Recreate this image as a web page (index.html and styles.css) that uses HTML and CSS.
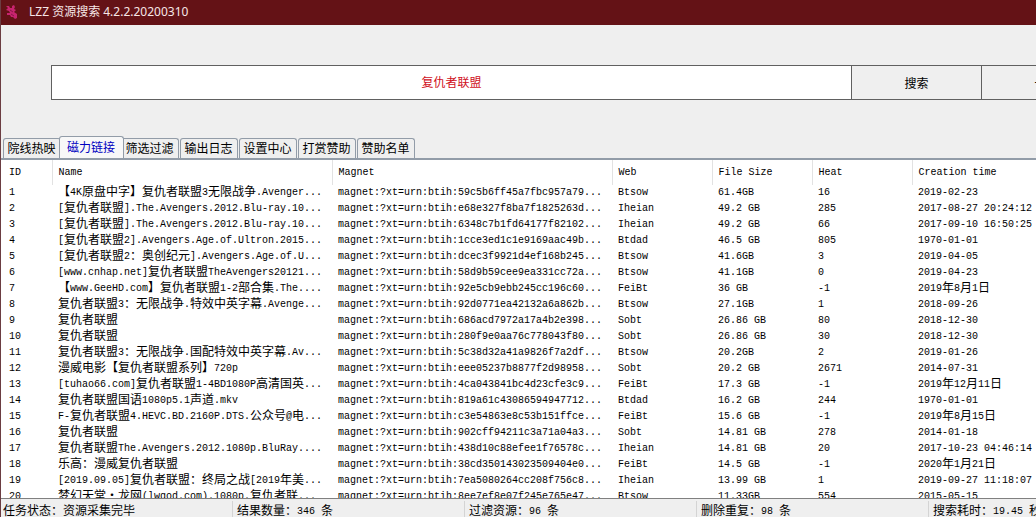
FILE: index.html
```html
<!DOCTYPE html>
<html lang="zh-CN">
<head>
<meta charset="utf-8">
<title>LZZ 资源搜索 4.2.2.20200310</title>
<link rel="stylesheet" href="styles.css">
</head>
<body>
<div class="window">
  <header class="titlebar">
    <svg class="logo" viewBox="0 0 14 16" aria-hidden="true">
      <path fill="#c8246e" d="M1 2 L4 2 L5 4 L7 4 L7 2 L9 1 L10 3 L9 5 L11 6 L9 8 L12 10 L12 14 L10 15 L8 13 L6 13 L5 11 L2 11 L2 9 L5 9 L4 7 L1 6 L3 4 Z"/>
      <path stroke="#8a1648" fill="none" d="M5 6 L8 8 M6 10 L9 12"/>
    </svg>
    <h1 class="title">LZZ 资源搜索 4.2.2.20200310</h1>
  </header>

  <form class="search">
    <input class="search-input" type="text" value="复仇者联盟" aria-label="搜索关键词">
    <button class="search-button" type="button">搜索</button>
    <button class="search-button" type="button">一键</button>
  </form>

  <nav class="tabs">
    <button class="tab" type="button">院线热映</button>
    <button class="tab active" type="button">磁力链接</button>
    <button class="tab" type="button">筛选过滤</button>
    <button class="tab" type="button">输出日志</button>
    <button class="tab" type="button">设置中心</button>
    <button class="tab" type="button">打赏赞助</button>
    <button class="tab" type="button">赞助名单</button>
  </nav>

  <main class="results">
    <table class="grid">
      <colgroup>
        <col class="col-id"><col class="col-wide"><col class="col-wide"><col class="col-narrow"><col class="col-narrow"><col class="col-narrow"><col>
      </colgroup>
      <thead>
        <tr><th>ID</th><th>Name</th><th>Magnet</th><th>Web</th><th>File Size</th><th>Heat</th><th>Creation time</th></tr>
      </thead>
      <tbody>
        <tr><td>1</td><td><span class="zh">【</span>4K<span class="zh">原盘中字】复仇者联盟</span>3<span class="zh">无限战争</span>.Avenger...</td><td>magnet:?xt=urn:btih:59c5b6ff45a7fbc957a79...</td><td>Btsow</td><td>61.4GB</td><td>16</td><td>2019-02-23</td></tr>
        <tr><td>2</td><td>[<span class="zh">复仇者联盟</span>].The.Avengers.2012.Blu-ray.10...</td><td>magnet:?xt=urn:btih:e68e327f8ba7f1825263d...</td><td>Iheian</td><td>49.2 GB</td><td>285</td><td>2017-08-27 20:24:12</td></tr>
        <tr><td>3</td><td>[<span class="zh">复仇者联盟</span>].The.Avengers.2012.Blu-ray.10...</td><td>magnet:?xt=urn:btih:6348c7b1fd64177f82102...</td><td>Iheian</td><td>49.2 GB</td><td>66</td><td>2017-09-10 16:50:25</td></tr>
        <tr><td>4</td><td>[<span class="zh">复仇者联盟</span>2].Avengers.Age.of.Ultron.2015...</td><td>magnet:?xt=urn:btih:1cce3ed1c1e9169aac49b...</td><td>Btdad</td><td>46.5 GB</td><td>805</td><td>1970-01-01</td></tr>
        <tr><td>5</td><td>[<span class="zh">复仇者联盟</span>2<span class="zh">：奥创纪元</span>].Avengers.Age.of.U...</td><td>magnet:?xt=urn:btih:dcec3f9921d4ef168b245...</td><td>Btsow</td><td>41.6GB</td><td>3</td><td>2019-04-05</td></tr>
        <tr><td>6</td><td>[www.cnhap.net]<span class="zh">复仇者联盟</span>TheAvengers20121...</td><td>magnet:?xt=urn:btih:58d9b59cee9ea331cc72a...</td><td>Btsow</td><td>41.1GB</td><td>0</td><td>2019-04-23</td></tr>
        <tr><td>7</td><td><span class="zh">【</span>www.GeeHD.com<span class="zh">】复仇者联盟</span>1-2<span class="zh">部合集</span>.The....</td><td>magnet:?xt=urn:btih:92e5cb9ebb245cc196c60...</td><td>FeiBt</td><td>36 GB</td><td>-1</td><td>2019<span class="zh">年</span>8<span class="zh">月</span>1<span class="zh">日</span></td></tr>
        <tr><td>8</td><td><span class="zh">复仇者联盟</span>3<span class="zh">：无限战争</span>.<span class="zh">特效中英字幕</span>.Avenge...</td><td>magnet:?xt=urn:btih:92d0771ea42132a6a862b...</td><td>Btsow</td><td>27.1GB</td><td>1</td><td>2018-09-26</td></tr>
        <tr><td>9</td><td><span class="zh">复仇者联盟</span></td><td>magnet:?xt=urn:btih:686acd7972a17a4b2e398...</td><td>Sobt</td><td>26.86 GB</td><td>80</td><td>2018-12-30</td></tr>
        <tr><td>10</td><td><span class="zh">复仇者联盟</span></td><td>magnet:?xt=urn:btih:280f9e0aa76c778043f80...</td><td>Sobt</td><td>26.86 GB</td><td>30</td><td>2018-12-30</td></tr>
        <tr><td>11</td><td><span class="zh">复仇者联盟</span>3<span class="zh">：无限战争</span>.<span class="zh">国配特效中英字幕</span>.Av...</td><td>magnet:?xt=urn:btih:5c38d32a41a9826f7a2df...</td><td>Btsow</td><td>20.2GB</td><td>2</td><td>2019-01-26</td></tr>
        <tr><td>12</td><td><span class="zh">漫威电影【复仇者联盟系列】</span>720p</td><td>magnet:?xt=urn:btih:eee05237b8877f2d98958...</td><td>Sobt</td><td>20.2 GB</td><td>2671</td><td>2014-07-31</td></tr>
        <tr><td>13</td><td>[tuhao66.com]<span class="zh">复仇者联盟</span>1-4BD1080P<span class="zh">高清国英</span>...</td><td>magnet:?xt=urn:btih:4ca043841bc4d23cfe3c9...</td><td>FeiBt</td><td>17.3 GB</td><td>-1</td><td>2019<span class="zh">年</span>12<span class="zh">月</span>11<span class="zh">日</span></td></tr>
        <tr><td>14</td><td><span class="zh">复仇者联盟国语</span>1080p5.1<span class="zh">声道</span>.mkv</td><td>magnet:?xt=urn:btih:819a61c43086594947712...</td><td>Btdad</td><td>16.2 GB</td><td>244</td><td>1970-01-01</td></tr>
        <tr><td>15</td><td>F-<span class="zh">复仇者联盟</span>4.HEVC.BD.2160P.DTS.<span class="zh">公众号</span>@<span class="zh">电</span>...</td><td>magnet:?xt=urn:btih:c3e54863e8c53b151ffce...</td><td>FeiBt</td><td>15.6 GB</td><td>-1</td><td>2019<span class="zh">年</span>8<span class="zh">月</span>15<span class="zh">日</span></td></tr>
        <tr><td>16</td><td><span class="zh">复仇者联盟</span></td><td>magnet:?xt=urn:btih:902cff94211c3a71a04a3...</td><td>Sobt</td><td>14.81 GB</td><td>278</td><td>2014-01-18</td></tr>
        <tr><td>17</td><td><span class="zh">复仇者联盟</span>The.Avengers.2012.1080p.BluRay....</td><td>magnet:?xt=urn:btih:438d10c88efee1f76578c...</td><td>Iheian</td><td>14.81 GB</td><td>20</td><td>2017-10-23 04:46:14</td></tr>
        <tr><td>18</td><td><span class="zh">乐高：漫威复仇者联盟</span></td><td>magnet:?xt=urn:btih:38cd350143023509404e0...</td><td>FeiBt</td><td>14.5 GB</td><td>-1</td><td>2020<span class="zh">年</span>1<span class="zh">月</span>21<span class="zh">日</span></td></tr>
        <tr><td>19</td><td>[2019.09.05]<span class="zh">复仇者联盟：终局之战</span>[2019<span class="zh">年美</span>...</td><td>magnet:?xt=urn:btih:7ea5080264cc208f756c8...</td><td>Iheian</td><td>13.99 GB</td><td>1</td><td>2019-09-27 11:18:07</td></tr>
        <tr><td>20</td><td><span class="zh">梦幻天堂・龙网</span>(lwgod.com).1080p.<span class="zh">复仇者联</span>...</td><td>magnet:?xt=urn:btih:8ee7ef8e07f245e765e47...</td><td>Btsow</td><td>11.33GB</td><td>554</td><td>2015-05-15</td></tr>
      </tbody>
    </table>
  </main>

  <footer class="status">
    <div class="pane"><span class="zh">任务状态：资源采集完毕</span></div>
    <div class="pane"><span class="zh">结果数量：</span>346 <span class="zh">条</span></div>
    <div class="pane"><span class="zh">过滤资源：</span>96 <span class="zh">条</span></div>
    <div class="pane"><span class="zh">删除重复：</span>98 <span class="zh">条</span></div>
    <div class="pane"><span class="zh">搜索耗时：</span>19.45 <span class="zh">秒</span></div>
  </footer>
</div>
</body>
</html>
```
FILE: styles.css
```css
* {
  box-sizing: border-box;
}

body {
  margin: 0;
  color: #000;
  background: #efefef;
  font: 12px/16px "Noto Sans CJK SC", sans-serif;
}

button,
input {
  margin: 0;
  padding: 0;
  border: 0;
  border-radius: 0;
  color: inherit;
  font: inherit;
}

.window {
  display: flex;
  flex-direction: column;
  height: 100vh;
  overflow: hidden;
  border-left: 1px solid #6b3d42;
}

/* Title bar */
.titlebar {
  display: flex;
  flex: none;
  align-items: center;
  gap: 10px;
  height: 25px;
  margin-left: -1px;
  padding: 0 0 2px 5px;
  color: #f6e6e6;
  background: #641216;
}

.logo {
  width: 14px;
  height: 16px;
}

.title {
  margin: 0;
  font: 12px/16px "Noto Sans", "Noto Sans CJK SC", sans-serif;
}

/* Search row: the last button runs past the window edge */
.search {
  display: flex;
  flex: none;
  height: 35px;
  margin: 40px -76px 0 50px;
  border: 1px solid #606060;
}

.search-input {
  flex: 1;
  min-width: 0;
  padding-bottom: 2px;
  color: #d0101c;
  background: #fff;
  text-align: center;
}

.search-button {
  flex: none;
  width: 130px;
  border-left: 1px solid #606060;
  background: #efefef;
}

/* Tabs */
.tabs {
  display: flex;
  flex: none;
  align-items: flex-end;
  gap: 1px;
  height: 58px;
  padding-left: 2px;
}

.tab {
  width: 58px;
  height: 20px;
  padding: 0 1px 2px 0;
  border: 1px solid #929ca8;
  border-bottom: 0;
  border-radius: 3px 3px 0 0;
  background: #efefef;
  line-height: 16px;
}

.tab.active {
  z-index: 1;
  width: 65px;
  height: 22px;
  margin: 0 -4px 0 -3px;
  color: #0000c0;
  background: #f8f8f8;
}

/* Result list */
.results {
  flex: 1;
  min-height: 0;
  overflow: hidden;
  border-top: 2px solid #929ca8;
  border-bottom: 1px solid #808080;
  background: #fff;
}

.grid {
  width: 100%;
  border-collapse: collapse;
  table-layout: fixed;
  font: 10px/16px "Liberation Mono", monospace;
}

.col-id {
  width: 51px;
}

.col-wide {
  width: 280px;
}

.col-narrow {
  width: 100px;
}

.grid th,
.grid td {
  height: 16px;
  padding: 0 0 0 6px;
  text-align: left;
  font-weight: 400;
  white-space: nowrap;
}

.grid th {
  height: 25px;
  border-right: 1px solid #e2e2e2;
}

.grid th:last-child {
  border-right: 0;
}

.grid th:first-child,
.grid td:first-child {
  padding-left: 8px;
}

.zh {
  font: 12px/0 "Noto Sans CJK SC", sans-serif;
  vertical-align: -1px;
}

/* Status bar */
.status {
  display: flex;
  flex: none;
  height: 18px;
  overflow: hidden;
  padding-top: 2px;
  font: 10px/22px "Liberation Mono", monospace;
}

.pane {
  flex: none;
  width: 232px;
  height: 22px;
  padding-left: 4px;
  border-right: 1px solid #d4d4d4;
  white-space: nowrap;
}

.pane:first-child {
  padding-left: 2px;
}
```
